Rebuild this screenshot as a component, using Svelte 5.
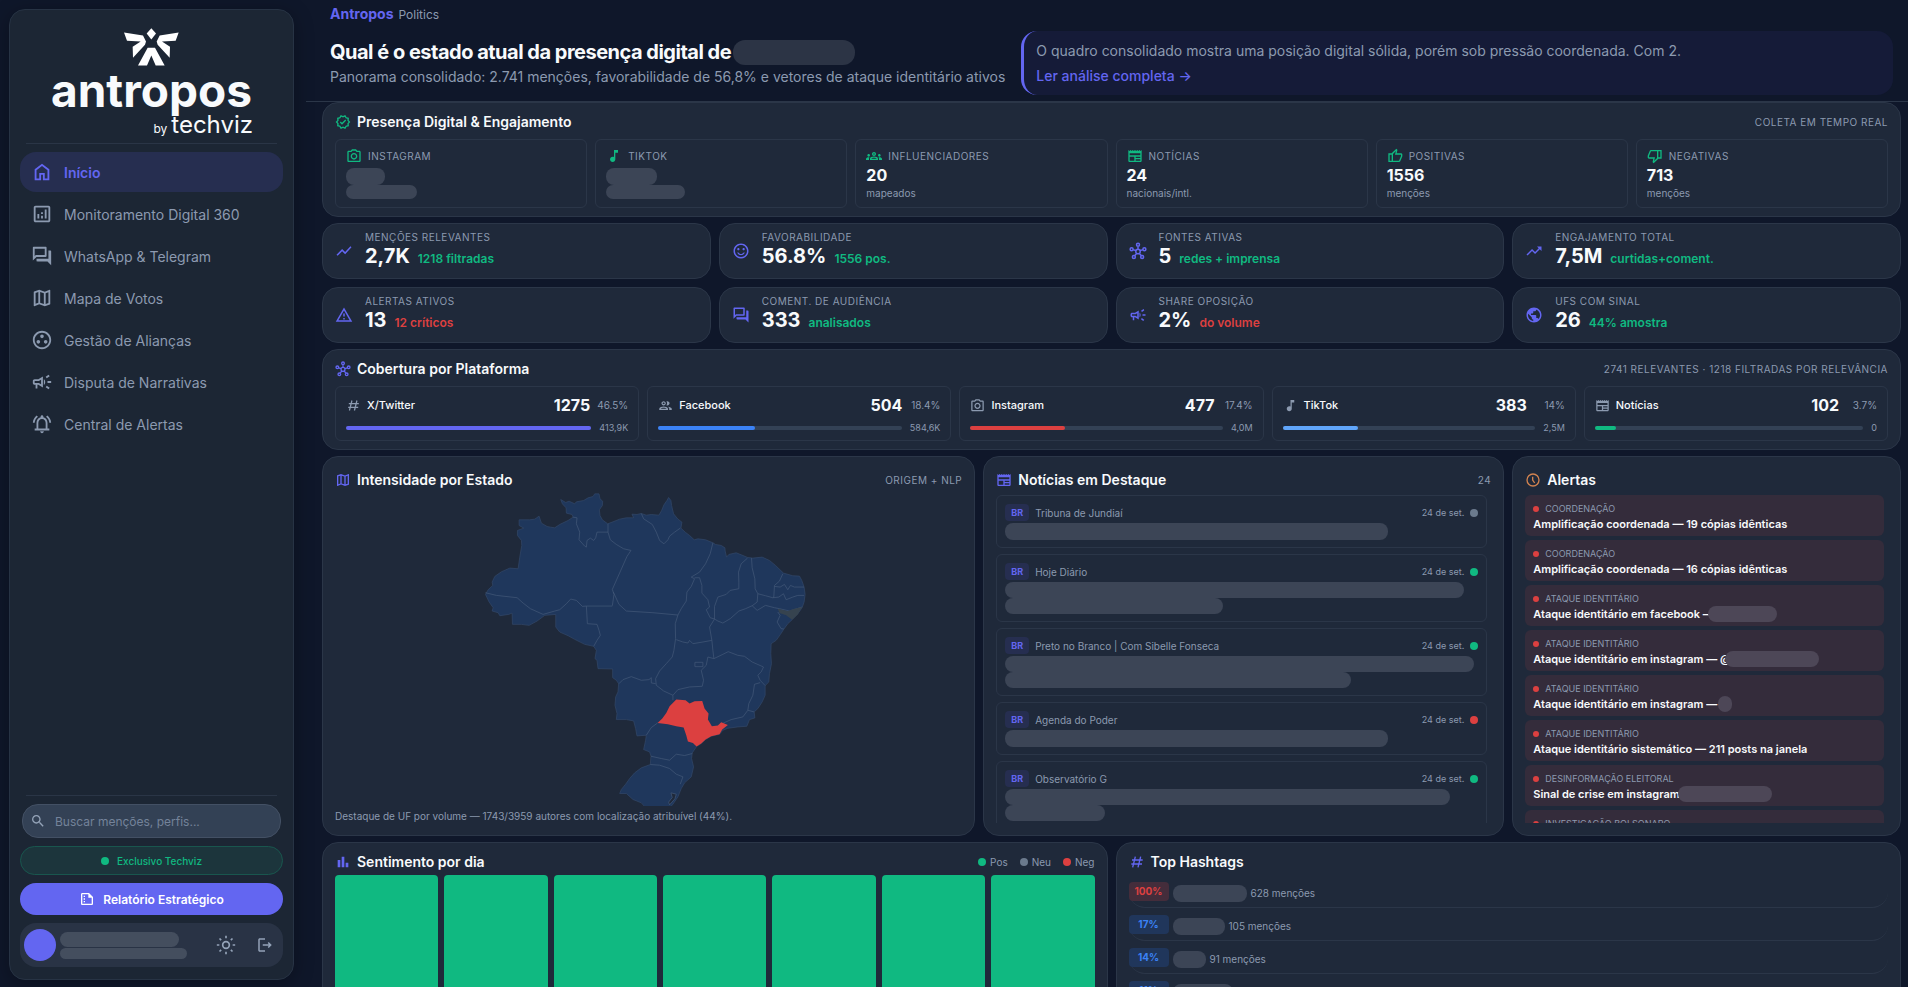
<script>
  const icons = {
    home: 'M6 19h3v-6h6v6h3v-9l-6-4.5L6 10v9zm-2 2V9l8-6 8 6v12h-7v-6h-2v6H4z',
    analytics: 'M19 3H5c-1.1 0-2 .9-2 2v14c0 1.1.9 2 2 2h14c1.1 0 2-.9 2-2V5c0-1.1-.9-2-2-2zm0 16H5V5h14v14zM7 12h2v5H7zm8-5h2v10h-2zm-4 7h2v3h-2zm0-4h2v2h-2z',
    forum: 'M15 4v7H5.17L4 12.17V4h11m1-2H3c-.55 0-1 .45-1 1v14l4-4h10c.55 0 1-.45 1-1V3c0-.55-.45-1-1-1zm5 4h-2v9H6v2c0 .55.45 1 1 1h11l4 4V7c0-.55-.45-1-1-1z',
    map: 'M20.5 3l-.16.03L15 5.1 9 3 3.36 4.9c-.21.07-.36.25-.36.48V20.5c0 .28.22.5.5.5l.16-.03L9 18.9l6 2.1 5.64-1.9c.21-.07.36-.25.36-.48V3.5c0-.28-.22-.5-.5-.5zM10 5.47l4 1.4v11.66l-4-1.4V5.47zm-5 .99l3-1.01v11.7l-3 1.16V6.46zm14 11.08l-3 1.01V6.86l3-1.16v11.84z',
    alliances: 'M12 2C6.48 2 2 6.48 2 12s4.48 10 10 10 10-4.48 10-10S17.52 2 12 2zm0 18c-4.41 0-8-3.59-8-8s3.59-8 8-8 8 3.59 8 8-3.59 8-8 8zM6 14a2 2 0 1 0 4 0a2 2 0 1 0-4 0zM14 14a2 2 0 1 0 4 0a2 2 0 1 0-4 0zM10 8a2 2 0 1 0 4 0a2 2 0 1 0-4 0z',
    campaign: 'M18 11v2h4v-2h-4zM16 17.61c.96.71 2.21 1.65 3.2 2.39.4-.53.8-1.07 1.2-1.6-.99-.74-2.24-1.68-3.2-2.4-.4.54-.8 1.08-1.2 1.61zM20.4 5.6c-.4-.53-.8-1.07-1.2-1.6-.99.74-2.24 1.68-3.2 2.4.4.53.8 1.07 1.2 1.6.96-.72 2.21-1.65 3.2-2.4zM4 9c-1.1 0-2 .9-2 2v2c0 1.1.9 2 2 2h1v4h2v-4h1l5 3V6L8 9H4zm5.03 1.71L11 9.53v4.94l-1.97-1.18-.48-.29H4v-2h4.55l.48-.29zM15.5 12c0-1.33-.58-2.53-1.5-3.35v6.69c.92-.81 1.5-2.01 1.5-3.34z',
    bell: 'M12 22c1.1 0 2-.9 2-2h-4c0 1.1.9 2 2 2zm6-5v-6c0-3.07-1.63-5.64-4.5-6.32V4c0-.83-.67-1.5-1.5-1.5s-1.5.67-1.5 1.5v.68C7.64 5.36 6 7.92 6 11v6H4v2h16v-2h-2zm-2 0H8v-6c0-2.48 1.51-4.5 4-4.5s4 2.02 4 4.5v6zM7.58 4.08L6.15 2.65C3.75 4.48 2.17 7.3 2.03 10.5h2c.15-2.65 1.51-4.97 3.55-6.42zm12.39 6.42h2c-.15-3.2-1.73-6.02-4.12-7.85l-1.42 1.43c2.02 1.45 3.39 3.77 3.54 6.42z',
    search: 'M15.5 14h-.79l-.28-.27C15.41 12.59 16 11.11 16 9.5 16 5.91 13.09 3 9.5 3S3 5.91 3 9.5 5.91 16 9.5 16c1.61 0 3.09-.59 4.23-1.57l.27.28v.79l5 4.99L20.49 19l-4.99-5zm-6 0C7.01 14 5 11.99 5 9.5S7.01 5 9.5 5 14 7.01 14 9.5 11.99 14 9.5 14z',
    report: 'M5 3c-1.1 0-2 .9-2 2v14c0 1.1.9 2 2 2h14c1.1 0 2-.9 2-2V9l-6-6H5zm0 2h9v5h5v9H5V5zM7 7h2v2H7zM7 11h2v2H7zM7 15h2v2H7z',
    logout: 'M17 8l-1.41 1.41L17.17 11H9v2h8.17l-1.58 1.58L17 16l4-4-4-4zM5 5h7V3H5c-1.1 0-2 .9-2 2v14c0 1.1.9 2 2 2h7v-2H5V5z',
    verified: 'M23 11.99l-2.44-2.79.34-3.69-3.61-.82L15.4 1.5 12 2.96 8.6 1.5 6.71 4.69 3.1 5.5l.34 3.7L1 11.99l2.44 2.79-.34 3.7 3.61.82 1.89 3.2 3.4-1.47 3.4 1.46 1.89-3.19 3.61-.82-.34-3.69 2.44-2.8zm-3.95 1.48l-.56.65.08.85.18 1.95-1.9.43-.84.19-.44.74-.99 1.68-1.78-.77-.8-.34-.79.34-1.78.77-.99-1.67-.44-.74-.84-.19-1.9-.43.18-1.96.08-.85-.56-.65-1.29-1.48 1.29-1.48.56-.65-.08-.85-.18-1.95 1.9-.43.84-.19.44-.74.99-1.68 1.78.77.8.34.79-.34 1.78-.77.99 1.68.44.74.84.19 1.9.43-.18 1.95-.08.85.56.65 1.29 1.47-1.29 1.48zM10.5 13.2l-1.9-1.9-1.4 1.4 3.3 3.3 6.3-6.3-1.4-1.4z',
    camera: 'M14.12 4l1.83 2H20v13H4V6h4.05l1.83-2h4.24M15 2H9L7.17 4H4c-1.1 0-2 .9-2 2v13c0 1.1.9 2 2 2h16c1.1 0 2-.9 2-2V6c0-1.1-.9-2-2-2h-3.17L15 2zm-3 7.5c1.65 0 3 1.35 3 3s-1.35 3-3 3-3-1.35-3-3 1.35-3 3-3m0-2c-2.76 0-5 2.24-5 5s2.24 5 5 5 5-2.24 5-5-2.24-5-5-5z',
    music: 'M12 3v10.55c-.59-.34-1.27-.55-2-.55-2.21 0-4 1.79-4 4s1.79 4 4 4 4-1.79 4-4V7h4V3h-6z',
    groups: 'M4 13c1.1 0 2-.9 2-2s-.9-2-2-2-2 .9-2 2 .9 2 2 2zm1.13 1.1C4.76 14.04 4.39 14 4 14c-.99 0-1.93.21-2.78.58C.48 14.9 0 15.62 0 16.43V18h4.5v-1.61c0-.83.23-1.61.63-2.29zM20 13c1.1 0 2-.9 2-2s-.9-2-2-2-2 .9-2 2 .9 2 2 2zm4 3.43c0-.81-.48-1.53-1.22-1.85-.85-.37-1.79-.58-2.78-.58-.39 0-.76.04-1.13.1.4.68.63 1.46.63 2.29V18H24v-1.57zm-7.76-2.78c-1.17-.52-2.61-.9-4.24-.9s-3.07.39-4.24.9C6.68 14.13 6 15.21 6 16.39V18h12v-1.61c0-1.18-.68-2.26-1.76-2.74zM8.07 16c.09-.23.13-.39.91-.69.97-.38 1.99-.56 3.02-.56s2.05.18 3.02.56c.77.3.81.46.91.69H8.07zM12 8c.55 0 1 .45 1 1s-.45 1-1 1-1-.45-1-1 .45-1 1-1m0-2c-1.66 0-3 1.34-3 3s1.34 3 3 3 3-1.34 3-3-1.34-3-3-3z',
    news: 'M22 3l-1.67 1.67L18.67 3 17 4.67 15.33 3l-1.66 1.67L12 3l-1.67 1.67L8.67 3 7 4.67 5.33 3 3.67 4.67 2 3v16c0 1.1.9 2 2 2h16c1.1 0 2-.9 2-2V3zM11 19H4v-6h7v6zm9 0h-7v-2h7v2zm0-4h-7v-2h7v2zm0-4H4V8h16v3z',
    up: 'M18 21H2V8h5l7-7 1.25 1.25c.23.23.35.62.35.95v.35L14.5 8H21c1.1 0 2 .9 2 2v2c0 .25-.05.5-.15.75l-3 7c-.3.75-1.05 1.25-1.85 1.25zM9 19h9l3-7v-2h-9l1.35-5.5L9 8.85V19zM7 10H4v9h3v-9z',
    down: 'M6 3h16v13h-5l-7 7-1.25-1.25c-.23-.23-.35-.62-.35-.95v-.35L9.5 16H3c-1.1 0-2-.9-2-2v-2c0-.25.05-.5.15-.75l3-7C4.45 3.5 5.2 3 6 3zM15 5H6l-3 7v2h9l-1.35 5.5L15 15.15V5zM17 14h3V5h-3v9z',
    chart: 'M3.5 18.49l6-6.01 4 4L22 6.92l-1.41-1.41-7.09 7.97-4-4L2 16.99z',
    trend: 'M16 6l2.29 2.29-4.88 4.88-4-4L2 16.59 3.41 18l6-6 4 4 6.3-6.29L22 12V6h-6z',
    mood: 'M12 2C6.48 2 2 6.48 2 12s4.48 10 10 10 10-4.48 10-10S17.52 2 12 2zm0 18c-4.41 0-8-3.59-8-8s3.59-8 8-8 8 3.59 8 8-3.59 8-8 8zM15.5 11c.83 0 1.5-.67 1.5-1.5S16.33 8 15.5 8 14 8.67 14 9.5s.67 1.5 1.5 1.5zm-7 0c.83 0 1.5-.67 1.5-1.5S9.33 8 8.5 8 7 8.67 7 9.5 7.67 11 8.5 11zm3.5 6.5c2.33 0 4.31-1.46 5.11-3.5h-1.67c-.69 1.19-1.97 2-3.44 2s-2.75-.81-3.44-2H6.89c.8 2.04 2.78 3.5 5.11 3.5z',
    warning: 'M12 5.99L19.53 19H4.47L12 5.99M12 2L1 21h22L12 2zm1 14h-2v2h2v-2zm0-6h-2v4h2v-4z',
    globe: 'M12 2C6.48 2 2 6.48 2 12s4.48 10 10 10 10-4.48 10-10S17.52 2 12 2zm-1 17.93c-3.95-.49-7-3.85-7-7.93 0-.62.08-1.21.21-1.79L9 15v1c0 1.1.9 2 2 2v1.93zm6.9-2.54c-.26-.81-1-1.39-1.9-1.39h-1v-3c0-.55-.45-1-1-1H8v-2h2c.55 0 1-.45 1-1V7h2c1.1 0 2-.9 2-2v-.41c2.93 1.19 5 4.06 5 7.41 0 2.08-.8 3.97-2.1 5.39z',
    group: 'M9 13.75c-2.34 0-7 1.17-7 3.5V19h14v-1.75c0-2.33-4.66-3.5-7-3.5zM4.34 17c.84-.58 2.87-1.25 4.66-1.25s3.82.67 4.66 1.25H4.34zM9 12c1.93 0 3.5-1.57 3.5-3.5S10.93 5 9 5 5.5 6.57 5.5 8.5 7.07 12 9 12zm0-5c.83 0 1.5.67 1.5 1.5S9.83 10 9 10s-1.5-.67-1.5-1.5S8.17 7 9 7zm7.04 6.81c1.16.84 1.96 1.96 1.96 3.44V19h4v-1.75c0-2.02-3.5-3.17-5.96-3.44zM15 12c1.93 0 3.5-1.57 3.5-3.5S16.93 5 15 5c-.54 0-1.04.13-1.5.35.63.89 1 1.98 1 3.15s-.37 2.26-1 3.15c.46.22.96.35 1.5.35z',
    bars: 'M4 9h4v11H4zM16 13h4v7h-4zM10 4h4v16h-4z',
  };

  // these are drawn with strokes instead of fills
  const lineIcons = {
    hub: 'M9 12.5a3 3 0 1 0 6 0a3 3 0 1 0-6 0M10 3.5a2 2 0 1 0 4 0a2 2 0 1 0-4 0M1.5 9.5a2 2 0 1 0 4 0a2 2 0 1 0-4 0M18.5 9.5a2 2 0 1 0 4 0a2 2 0 1 0-4 0M4.500 20a2 2 0 1 0 4 0a2 2 0 1 0-4 0M15.5 20a2 2 0 1 0 4 0a2 2 0 1 0-4 0M12 5.5v4M5.5 10.2l3.6 1.3M18.5 10.2l-3.6 1.3M7.7 18.3l2.5-3.3M16.3 18.3l-2.5-3.3',
    tag: 'M9.5 4l-4 16M17.5 4l-4 16M4.5 9h16M3.5 15h16',
    clock: 'M3 12a9 9 0 1 0 18 0a9 9 0 1 0-18 0M11.5 7v5l3 4.5',
    sun: 'M8 12a4 4 0 1 0 8 0a4 4 0 1 0-8 0M12 1v3M12 20v3M1 12h3M20 12h3M4.2 4.2l2 2M17.8 17.8l2 2M4.2 19.8l2-2M17.8 6.2l2-2',
  };

  const nav = [
    { icon: 'home', label: 'Início', active: true },
    { icon: 'analytics', label: 'Monitoramento Digital 360' },
    { icon: 'forum', label: 'WhatsApp & Telegram' },
    { icon: 'map', label: 'Mapa de Votos' },
    { icon: 'alliances', label: 'Gestão de Alianças' },
    { icon: 'campaign', label: 'Disputa de Narrativas' },
    { icon: 'bell', label: 'Central de Alertas' },
  ];

  const presence = [
    { icon: 'camera', label: 'Instagram', hidden: [39, 71] },
    { icon: 'music', label: 'TikTok', hidden: [51, 79] },
    { icon: 'groups', label: 'Influenciadores', value: '20', note: 'mapeados' },
    { icon: 'news', label: 'Notícias', value: '24', note: 'nacionais/intl.' },
    { icon: 'up', label: 'Positivas', value: '1556', note: 'menções' },
    { icon: 'down', label: 'Negativas', value: '713', note: 'menções' },
  ];

  const kpis = [
    { icon: 'chart', label: 'Menções relevantes', value: '2,7K', note: '1218 filtradas' },
    { icon: 'mood', label: 'Favorabilidade', value: '56.8%', note: '1556 pos.' },
    { icon: 'hub', label: 'Fontes ativas', value: '5', note: 'redes + imprensa' },
    { icon: 'trend', label: 'Engajamento total', value: '7,5M', note: 'curtidas+coment.' },
    { icon: 'warning', label: 'Alertas ativos', value: '13', note: '12 críticos', bad: true },
    { icon: 'forum', label: 'Coment. de audiência', value: '333', note: 'analisados' },
    { icon: 'campaign', label: 'Share oposição', value: '2%', note: 'do volume', bad: true },
    { icon: 'globe', label: 'UFs com sinal', value: '26', note: '44% amostra' },
  ];

  const platforms = [
    { icon: 'tag', name: 'X/Twitter', count: 1275, pct: '46.5%', reach: '413,9K', color: '#6366f1' },
    { icon: 'group', name: 'Facebook', count: 504, pct: '18.4%', reach: '584,6K', color: '#3b82f6' },
    { icon: 'camera', name: 'Instagram', count: 477, pct: '17.4%', reach: '4,0M', color: '#dc4040' },
    { icon: 'music', name: 'TikTok', count: 383, pct: '14%', reach: '2,5M', color: '#60a5fa' },
    { icon: 'news', name: 'Notícias', count: 102, pct: '3.7%', reach: '0', color: '#10b981' },
  ];
  const maxCount = Math.max(...platforms.map((p) => p.count));

  const news = [
    { source: 'Tribuna de Jundiaí', tone: 'neu', lines: [81] },
    { source: 'Hoje Diário', tone: 'pos', lines: [97, 46] },
    { source: 'Preto no Branco | Com Sibelle Fonseca', tone: 'pos', lines: [99, 73] },
    { source: 'Agenda do Poder', tone: 'neg', lines: [81] },
    { source: 'Observatório G', tone: 'pos', lines: [94, 21] },
  ];

  const alerts = [
    { kind: 'Coordenação', text: 'Amplificação coordenada — 19 cópias idênticas' },
    { kind: 'Coordenação', text: 'Amplificação coordenada — 16 cópias idênticas' },
    { kind: 'Ataque identitário', text: 'Ataque identitário em facebook —', hidden: 69 },
    { kind: 'Ataque identitário', text: 'Ataque identitário em instagram — @', hidden: 94 },
    { kind: 'Ataque identitário', text: 'Ataque identitário em instagram — ', hidden: 14, apart: true },
    { kind: 'Ataque identitário', text: 'Ataque identitário sistemático — 211 posts na janela' },
    { kind: 'Desinformação eleitoral', text: 'Sinal de crise em instagram', hidden: 94, apart: true },
    { kind: 'Investigação Bolsonaro', text: '' },
  ];

  const days = [160, 160, 160, 160, 160, 160, 160];

  const hashtags = [
    { pct: '100%', hidden: 74, count: '628 menções', hot: true },
    { pct: '17%', hidden: 52, count: '105 menções' },
    { pct: '14%', hidden: 33, count: '91 menções' },
    { pct: '11%', hidden: 60, count: '70 menções' },
  ];

  let query = $state('');
</script>

{#snippet icon(name, size)}
  <svg class="icon" width={size} height={size} viewBox="0 0 24 24" aria-hidden="true">
    {#if lineIcons[name]}
      <path class="line" d={lineIcons[name]} />
    {:else}
      <path d={icons[name]} />
    {/if}
  </svg>
{/snippet}

<div class="shell">
  <aside class="sidebar">
    <div class="logo">
      <svg class="bird" width="55" height="38" viewBox="375 84 165 113" aria-hidden="true">
        <path d="M457 84l14 16-14 18-14-18z" />
        <path d="M375 97l57 9 9 18-3 10-36 39-1-33 24-16-41-2z" />
        <path d="M539 97l-57 9-9 18 3 10 36 39 1-33-24-16 41-2z" />
        <path d="M446 143h22l29 53h-27l-13-30-13 30h-27z" />
      </svg>
      <div class="wordmark">antropos</div>
      <div class="byline"><small>by</small>techviz</div>
    </div>

    <nav class="nav">
      {#each nav as item}
        <a href="#{item.icon}" class:active={item.active}>
          {@render icon(item.icon, 22)}
          <span>{item.label}</span>
        </a>
      {/each}
    </nav>

    <div class="side-foot">
      <label class="search">
        {@render icon('search', 16)}
        <input type="text" placeholder="Buscar menções, perfis..." aria-label="Buscar" bind:value={query} />
      </label>
      <div class="exclusive"><i class="dot pos"></i>Exclusivo Techviz</div>
      <button class="report" type="button">{@render icon('report', 16)}Relatório Estratégico</button>
      <div class="user">
        <div class="avatar"></div>
        <div class="who"><i class="name"></i><i class="mail"></i></div>
        <button type="button" aria-label="Tema">{@render icon('sun', 20)}</button>
        <button type="button" aria-label="Sair">{@render icon('logout', 18)}</button>
      </div>
    </div>
  </aside>

  <main class="main">
    <header class="top">
      <div class="crumb"><strong>Antropos</strong><span>Politics</span></div>
      <div class="intro">
        <div class="question">
          <h1>Qual é o estado atual da presença digital de<i class="mask"></i></h1>
          <p>Panorama consolidado: 2.741 menções, favorabilidade de 56,8% e vetores de ataque identitário ativos</p>
        </div>
        <div class="callout">
          <p>O quadro consolidado mostra uma posição digital sólida, porém sob pressão coordenada. Com 2.</p>
          <a href="#analise">Ler análise completa →</a>
        </div>
      </div>
    </header>

    <div class="content">
      <section class="card">
        <div class="head">
          <span class="green">{@render icon('verified', 16)}</span>
          <h2>Presença Digital &amp; Engajamento</h2>
          <span class="aside">Coleta em tempo real</span>
        </div>
        <div class="presence">
          {#each presence as p}
            <div class="cell">
              <div class="cell-label"><span class="green">{@render icon(p.icon, 16)}</span>{p.label}</div>
              {#if p.hidden}
                <i class="mask value-mask" style="width: {p.hidden[0]}px"></i>
                <i class="mask note-mask" style="width: {p.hidden[1]}px"></i>
              {:else}
                <div class="cell-value">{p.value}</div>
                <div class="cell-note">{p.note}</div>
              {/if}
            </div>
          {/each}
        </div>
      </section>

      <div class="kpis">
        {#each kpis as k}
          <div class="card kpi">
            {@render icon(k.icon, 18)}
            <div class="kpi-body">
              <div class="kpi-label">{k.label}</div>
              <div class="kpi-row">
                <strong>{k.value}</strong>
                <span class:bad={k.bad}>{k.note}</span>
              </div>
            </div>
          </div>
        {/each}
      </div>

      <section class="card">
        <div class="head">
          {@render icon('hub', 16)}
          <h2>Cobertura por Plataforma</h2>
          <span class="aside">2741 relevantes · 1218 filtradas por relevância</span>
        </div>
        <div class="platforms">
          {#each platforms as p}
            <div class="cell">
              <div class="platform-row">
                {@render icon(p.icon, 15)}
                <span class="platform-name">{p.name}</span>
                <strong>{p.count}</strong>
                <span class="pct">{p.pct}</span>
              </div>
              <div class="meter">
                <div class="track">
                  <div class="fill" style="width: {(p.count / maxCount) * 100}%; background: {p.color}"></div>
                </div>
                <span>{p.reach}</span>
              </div>
            </div>
          {/each}
        </div>
      </section>

      <div class="grid middle">
        <section class="card tall span5">
          <div class="head">
            {@render icon('map', 16)}
            <h2>Intensidade por Estado</h2>
            <span class="aside">Origem + NLP</span>
          </div>
          <svg class="brazil" viewBox="-375 128 1884 939" role="img" aria-label="Mapa do Brasil por estado">
            <path
              class="land"
              d="M303 147L318 156L328 152L345 160L350 154L372 150L385 142L400 138L405 130L418 130L421 145L429 152L428 165L419 178L421 195L428 208L444 220L460 214L480 206L500 202L522 202L517 191L532 192L545 189L560 194L575 192L598 194L606 180L613 163L622 150L627 141L634 150L636 165L642 190L655 206L667 215L664 233L678 246L690 255L704 268L715 265L738 268L760 277L768 282L785 285L796 292L797 302L801 320L808 312L830 307L845 313L864 321L880 323L908 320L930 330L948 345L972 368L1000 376L1020 377L1027 390L1034 410L1037 432L1034 455L1028 472L1015 490L998 508L985 520L972 538L963 552L950 570L935 580L934 610L936 640L930 670L928 695L917 706L917 735L908 755L895 775L884 785L886 803L870 808L862 828L835 830L805 834L790 840L780 852L755 858L738 868L725 880L711 889L698 908L696 925L702 950L695 980L675 998L665 1015L655 1040L640 1062L625 1080L565 1080L545 1058L520 1048L500 1030L480 1030L485 1018L498 1002L510 985L525 968L545 953L572 943L574 918L570 905L552 898L558 870L560 855L532 857L528 835L522 812L500 808L470 808L472 790L466 765L468 740L475 725L477 700L470 690L459 682L459 656L415 655L412 630L406 625L410 600L402 588L375 582L345 567L325 556L300 545L288 530L288 492L255 495L232 512L208 525L185 522L158 522L157 488L147 492L120 496L115 487L97 482L100 472L88 455L77 432L85 418L99 405L97 395L105 378L125 364L150 353L175 355L180 320L186 285L185 270L173 255L173 240L192 233L178 225L178 208L210 208L225 206L238 197L245 218L262 228L272 230L285 232L300 222L325 210L340 200L337 192L320 188L319 172L308 160Z"
            />
            <path
              class="borders"
              d="M340 200L352 202L350 220L360 245L358 268L375 287L380 290L382 270L392 263L402 270L408 262L412 245L445 245V220M445 245L452 268L470 282L492 295L514 300L502 318L458 417L463 432L458 466M77 427L110 435L172 442L190 458L212 475L250 492L285 482L300 478L320 460L333 446L350 450L368 468L380 467H458M380 467L383 520L412 522L418 540L422 555L412 570L402 588M461 425L478 462L500 482L580 487L655 494M545 189L552 205L578 222L590 245L600 270L613 280L625 268L630 257L645 245L662 233M760 277L752 310L738 340L720 365L695 380L705 385L695 408L682 425L680 452L665 475L655 494M705 382L720 382L727 405L727 428L745 448L750 470L740 478L752 502L765 506M864 323L845 340L837 365L838 395L838 415L812 420L800 432L775 440L765 468L765 506L775 512L790 518L812 505L838 482L858 475L878 466L893 455L895 430L887 415L886 385L878 352L876 323M895 430L918 436L940 442L943 440L945 405L960 392L970 370M945 408L962 410L975 402L985 418L993 405L1005 410L1034 410M940 442L958 440L972 430L980 448L1000 440L1015 435L1034 435M878 466L893 480L918 465L945 472L960 475L990 482L1028 470M955 485L962 495L953 515L965 535L973 536M655 494L647 520L648 565L643 600L638 620L620 640L600 662L588 685L590 705L612 722L640 735V750M650 568L670 575L685 578L690 570L700 580L730 575L757 570M765 506L750 530L757 570L760 600L763 625L745 620L740 645L725 660L732 690L728 708L690 710L655 718L640 735M706 636h24v13h-24zM478 700L490 688L515 679L545 690L568 688L575 682L575 698L588 700M763 625L790 612L806 604L835 615L855 618L878 635L912 650L905 665L895 675L902 690L917 706M902 697L885 702L880 735L868 760L865 780L884 785M865 780L850 800L815 808L788 820M594 818L575 832L560 855M574 918L605 925L630 930L650 912L675 916L698 910M572 943L600 945L630 955L650 972L670 980L662 1002"
            />
            <path class="no-data" d="M955 475L985 482L1005 475L1028 470L1015 492L998 508L980 495L960 488Z" />
            <path class="water" d="M634 1028L650 1032L646 1046L630 1064L627 1056L638 1042Z" />
            <path
              class="hot"
              d="M594 818L608 805L620 788L630 768L650 748L678 750L690 760L705 753L728 752L735 775L747 790L745 808L757 828L775 826L785 816L805 824L788 838L780 852L755 858L738 868L725 880L711 889L700 878L685 874L680 855L672 832L650 828L625 822Z"
            />
          </svg>
          <p class="caption">Destaque de UF por volume — 1743/3959 autores com localização atribuível (44%).</p>
        </section>

        <section class="card tall span4">
          <div class="head">
            {@render icon('news', 16)}
            <h2>Notícias em Destaque</h2>
            <span class="aside">24</span>
          </div>
          <div class="list news">
            {#each news as n}
              <article class="cell">
                <div class="news-row">
                  <b>BR</b>
                  <span class="source">{n.source}</span>
                  <time>24 de set.</time>
                  <i class="dot {n.tone}"></i>
                </div>
                {#each n.lines as width}
                  <i class="mask" class:single={n.lines.length === 1} style="width: {width}%"></i>
                {/each}
              </article>
            {/each}
          </div>
        </section>

        <section class="card tall span3">
          <div class="head">
            <span class="orange">{@render icon('clock', 16)}</span>
            <h2>Alertas</h2>
          </div>
          <div class="list alerts">
            {#each alerts as a}
              <article class="alert">
                <div class="alert-kind"><i class="dot neg"></i>{a.kind}</div>
                <div class="alert-text">
                  <span>{a.text}</span>{#if a.hidden}<i class="mask" class:apart={a.apart} style="width: {a.hidden}px"></i>{/if}
                </div>
              </article>
            {/each}
          </div>
        </section>
      </div>

      <div class="grid">
        <section class="card snug span6">
          <div class="head">
            {@render icon('bars', 16)}
            <h2>Sentimento por dia</h2>
            <div class="legend">
              <span><i class="dot pos"></i>Pos</span>
              <span><i class="dot neu"></i>Neu</span>
              <span><i class="dot neg"></i>Neg</span>
            </div>
          </div>
          <div class="days">
            {#each days as height}
              <div class="day" style="height: {height}px"></div>
            {/each}
          </div>
        </section>

        <section class="card snug span6">
          <div class="head">
            {@render icon('tag', 16)}
            <h2>Top Hashtags</h2>
          </div>
          {#each hashtags as h}
            <div class="hashtag">
              <b class:hot={h.hot}>{h.pct}</b>
              <i class="mask" style="width: {h.hidden}px"></i>
              <span>{h.count}</span>
            </div>
          {/each}
        </section>
      </div>
    </div>
  </main>
</div>

<style>
  :global(body) {
    margin: 0;
    background: #0f172a;
  }

  .shell {
    --accent: #6366f1;
    --green: #10b981;
    --red: #dc4040;
    --text: #f8fafc;
    --muted: #8c9ab0;
    --card: #1f293a;
    --line: #2b3648;
    --mask: #3c4556;
    display: flex;
    gap: 12px;
    height: 100vh;
    overflow: hidden;
    color: var(--text);
    font-family: Inter, sans-serif;
    font-size: 14px;
  }

  .shell :global(*) {
    box-sizing: border-box;
  }

  h1, h2, p {
    margin: 0;
  }

  a {
    text-decoration: none;
  }

  button {
    display: flex;
    align-items: center;
    justify-content: center;
    padding: 0;
    border: 0;
    background: none;
    color: inherit;
    font-family: inherit;
    cursor: pointer;
  }

  .icon {
    display: block;
    flex-shrink: 0;
    fill: currentColor;
  }

  .icon .line {
    fill: none;
    stroke: currentColor;
    stroke-width: 2;
  }

  .dot {
    width: 8px;
    height: 8px;
    border-radius: 50%;
    flex-shrink: 0;
  }

  .pos { background: var(--green); }
  .neu { background: #6b7a8d; }
  .neg { background: var(--red); }
  .green { color: var(--green); }
  .orange { color: #d18350; }

  .mask {
    display: block;
    flex-shrink: 0;
    border-radius: 8px;
    background: var(--mask);
  }

  /* sidebar */
  .sidebar {
    display: flex;
    flex-direction: column;
    flex-shrink: 0;
    width: 285px;
    margin: 9px 0 7px 9px;
    padding: 18px 10px 12px;
    border: 1px solid #273344;
    border-radius: 16px;
    background: #1c2634;
    box-shadow: 0 4px 20px rgba(0, 0, 0, 0.3);
  }

  .logo {
    display: flex;
    flex-direction: column;
    align-items: center;
    margin: 0 6px 8px;
    padding-bottom: 6px;
    border-bottom: 1px solid #2a3546;
  }

  .bird {
    fill: #fff;
  }

  .wordmark {
    margin-top: 1px;
    font-size: 46px;
    font-weight: 700;
    line-height: 46px;
  }

  .byline {
    display: flex;
    align-items: baseline;
    align-self: flex-end;
    gap: 4px;
    height: 24px;
    margin-right: 24px;
    font-size: 24px;
    line-height: 24px;
  }

  .byline small {
    font-size: 12px;
  }

  .nav {
    display: flex;
    flex-direction: column;
    flex: 1;
    gap: 2px;
  }

  .nav a {
    display: flex;
    align-items: center;
    gap: 11px;
    height: 40px;
    padding: 0 11px;
    border-radius: 16px;
    color: var(--muted);
  }

  .nav a.active {
    background: #262e50;
    color: var(--accent);
    font-weight: 600;
  }

  .side-foot {
    display: flex;
    flex-direction: column;
    gap: 8px;
  }

  .side-foot::before {
    content: '';
    margin: 0 6px;
    border-top: 1px solid #2a3546;
  }

  .search {
    display: flex;
    align-items: center;
    gap: 9px;
    height: 34px;
    margin: 0 2px;
    padding: 0 7px;
    border: 1px solid #435064;
    border-radius: 16px;
    background: #334155;
    color: #94a3b8;
  }

  .search input {
    flex: 1;
    min-width: 0;
    padding: 0;
    border: 0;
    outline: 0;
    background: none;
    color: var(--text);
    font-family: inherit;
    font-size: 12px;
  }

  .search input::placeholder {
    color: #74839a;
  }

  .exclusive {
    display: flex;
    align-items: center;
    justify-content: center;
    gap: 8px;
    height: 29px;
    border: 1px solid #19564e;
    border-radius: 16px;
    background: #1c353c;
    color: var(--green);
    font-size: 10px;
    font-weight: 500;
  }

  .report {
    gap: 8px;
    height: 32px;
    border-radius: 16px;
    background: var(--accent);
    color: #fff;
    font-size: 12px;
    font-weight: 600;
  }

  .user {
    display: flex;
    align-items: center;
    gap: 20px;
    height: 44px;
    padding: 0 9px 0 4px;
    border-radius: 16px;
    background: #293345;
    color: #94a3b8;
  }

  .avatar {
    width: 32px;
    height: 32px;
    border-radius: 50%;
    background: var(--accent);
  }

  .who {
    display: flex;
    flex-direction: column;
    flex: 1;
    gap: 1px;
    margin-left: -16px;
  }

  .who i {
    border-radius: 8px;
    background: #444e5e;
  }

  .who .name {
    width: 119px;
    height: 15px;
  }

  .who .mail {
    width: 127px;
    height: 11px;
  }

  /* header */
  .main {
    display: flex;
    flex-direction: column;
    flex: 1;
    min-width: 0;
  }

  .top {
    flex-shrink: 0;
    padding: 4px 15px 6px 24px;
    border-bottom: 1px solid var(--line);
  }

  .crumb {
    display: flex;
    align-items: baseline;
    gap: 5px;
    height: 20px;
    margin-bottom: 7px;
    line-height: 20px;
  }

  .crumb strong {
    color: var(--accent);
    font-weight: 700;
  }

  .crumb span {
    color: var(--muted);
    font-size: 12px;
  }

  .intro {
    display: flex;
    align-items: center;
    gap: 16px;
  }

  .question {
    flex-shrink: 0;
  }

  h1 {
    display: flex;
    align-items: center;
    gap: 2px;
    font-size: 20px;
    font-weight: 700;
    letter-spacing: -0.5px;
    line-height: 28px;
  }

  h1 .mask {
    width: 122px;
    height: 25px;
    border-radius: 12px;
    background: #2c3445;
  }

  .question p,
  .callout p {
    color: var(--muted);
    line-height: 22px;
  }

  .callout {
    display: flex;
    flex-direction: column;
    flex: 1;
    gap: 3px;
    min-width: 0;
    padding: 9px 12px 8px;
    border-left: 3px solid var(--accent);
    border-radius: 16px;
    background: #151b38;
  }

  .callout a {
    color: var(--accent);
    font-weight: 500;
    line-height: 22px;
  }

  /* cards */
  .content {
    display: flex;
    flex-direction: column;
    flex: 1;
    gap: 6px;
    min-height: 0;
    padding: 0 7px 16px 16px;
    overflow-y: auto;
    scrollbar-width: none;
  }

  .content > * {
    flex-shrink: 0;
  }

  .card {
    padding: 8px 12px;
    border: 1px solid var(--line);
    border-radius: 16px;
    background: var(--card);
  }

  .head {
    display: flex;
    align-items: center;
    gap: 6px;
    margin-bottom: 7px;
    color: var(--accent);
  }

  .head h2 {
    color: var(--text);
    font-size: 14px;
    font-weight: 600;
    line-height: 21px;
  }

  .aside {
    margin-left: auto;
    color: var(--muted);
    font-size: 10px;
    letter-spacing: 0.5px;
    text-transform: uppercase;
  }

  .cell {
    border: 1px solid var(--line);
    border-radius: 6px;
  }

  .presence {
    display: grid;
    grid-template-columns: repeat(6, 1fr);
    gap: 8px;
  }

  .presence .cell {
    height: 69px;
    padding: 8px 10px;
  }

  .cell-label {
    display: flex;
    align-items: center;
    gap: 6px;
    color: var(--muted);
    font-size: 10px;
    letter-spacing: 0.5px;
    line-height: 16px;
    text-transform: uppercase;
  }

  .cell-value {
    font-size: 16px;
    font-weight: 700;
    line-height: 22px;
  }

  .cell-note {
    color: var(--muted);
    font-size: 10px;
    line-height: 14px;
  }

  .value-mask {
    height: 17px;
    margin-top: 4px;
  }

  .note-mask {
    height: 14px;
  }

  .kpis {
    display: grid;
    grid-template-columns: repeat(4, 1fr);
    gap: 8px;
  }

  .kpi {
    display: flex;
    align-items: center;
    gap: 12px;
    padding: 6px 12px;
    color: var(--accent);
  }

  .kpi-body {
    padding-bottom: 4px;
  }

  .kpi-label {
    color: var(--muted);
    font-size: 10px;
    letter-spacing: 0.5px;
    line-height: 14px;
    text-transform: uppercase;
  }

  .kpi-row {
    display: flex;
    align-items: baseline;
    gap: 8px;
    height: 24px;
    line-height: 24px;
  }

  .kpi-row strong {
    color: var(--text);
    font-size: 20px;
    font-weight: 700;
  }

  .kpi-row span {
    color: var(--green);
    font-size: 12px;
    font-weight: 600;
  }

  .kpi-row .bad {
    color: var(--red);
  }

  .platforms {
    display: grid;
    grid-template-columns: repeat(5, 1fr);
    gap: 8px;
  }

  .platforms .cell {
    padding: 7px 10px 6px;
  }

  .platform-row {
    display: flex;
    align-items: center;
    gap: 6px;
    color: var(--muted);
    line-height: 22px;
  }

  .platform-name {
    flex: 1;
    color: var(--text);
    font-size: 11px;
    font-weight: 500;
  }

  .platform-row strong {
    color: var(--text);
    font-size: 16px;
    font-weight: 700;
  }

  .pct {
    width: 32px;
    font-size: 10px;
    text-align: right;
  }

  .meter {
    display: flex;
    align-items: center;
    gap: 8px;
    margin-top: 6px;
    color: var(--muted);
    font-size: 9px;
    line-height: 12px;
  }

  .track {
    flex: 1;
    height: 4px;
    border-radius: 2px;
    background: #334155;
  }

  .fill {
    height: 4px;
    border-radius: 2px;
  }

  /* lower grid */
  .grid {
    display: grid;
    grid-template-columns: repeat(12, 1fr);
    gap: 8px;
  }

  .middle {
    grid-template-rows: 380px;
  }

  .span3 { grid-column: span 3; }
  .span4 { grid-column: span 4; }
  .span5 { grid-column: span 5; }
  .span6 { grid-column: span 6; }

  .tall {
    display: flex;
    flex-direction: column;
    min-height: 0;
    padding: 12px;
  }

  .tall .head {
    margin-bottom: 5px;
  }

  .snug .head {
    margin-bottom: 3px;
  }

  .brazil {
    flex: 1;
    min-height: 0;
    width: 100%;
    margin-top: -2px;
  }

  .land {
    fill: #1f375c;
    stroke: #34486a;
    stroke-width: 2;
  }

  .borders {
    fill: none;
    stroke: #465a7a;
    stroke-width: 2;
  }

  .no-data { fill: #36434f; }
  .water { fill: var(--card); stroke: #465a7a; stroke-width: 2; }
  .hot { fill: var(--red); }

  .caption {
    margin-top: 3px;
    color: var(--muted);
    font-size: 10px;
    line-height: 14px;
  }

  .list {
    display: flex;
    flex-direction: column;
    flex: 1;
    min-height: 0;
    overflow: hidden;
  }

  .list > * {
    flex-shrink: 0;
  }

  .news {
    gap: 6px;
    padding-right: 4px;
  }

  .news .cell {
    padding: 8px 8px 7px;
  }

  .news .mask {
    height: 16px;
  }

  .news .single {
    height: 17px;
  }

  .news-row {
    display: flex;
    align-items: center;
    gap: 6px;
    height: 17px;
    margin-bottom: 2px;
    color: var(--muted);
    font-size: 10px;
  }

  .news-row b {
    padding: 0 6px;
    border-radius: 4px;
    background: #262e50;
    color: var(--accent);
    font-size: 9px;
    font-weight: 700;
    line-height: 17px;
  }

  .source {
    flex: 1;
  }

  .news-row time {
    font-size: 9px;
  }

  .alerts {
    gap: 4px;
    padding-right: 4px;
  }

  .alert {
    padding: 6px 8px 4px;
    border-radius: 6px;
    background: #342c3b;
  }

  .alert-kind {
    display: flex;
    align-items: center;
    gap: 6px;
    color: var(--muted);
    font-size: 9px;
    line-height: 15px;
    text-transform: uppercase;
  }

  .alert-kind .dot {
    width: 6px;
    height: 6px;
  }

  .alert-text {
    display: flex;
    align-items: center;
    height: 16px;
    font-size: 11px;
    font-weight: 600;
    white-space: pre;
  }

  .alert-text .mask {
    height: 16px;
    margin-left: -6px;
    background: #4d4757;
  }

  .alert-text .apart {
    margin-left: -2px;
  }

  .legend {
    display: flex;
    gap: 12px;
    margin-left: auto;
    color: var(--muted);
    font-size: 10px;
  }

  .legend span {
    display: flex;
    align-items: center;
    gap: 4px;
  }

  .days {
    display: flex;
    align-items: flex-end;
    gap: 6px;
  }

  .day {
    flex: 1;
    border-radius: 4px 4px 0 0;
    background: var(--green);
  }

  .hashtag {
    display: flex;
    align-items: center;
    gap: 4px;
    height: 33px;
    padding-top: 4px;
    border-bottom: 1px solid var(--line);
    border-radius: 16px;
    color: var(--muted);
    font-size: 10px;
  }

  .hashtag b {
    width: 40px;
    margin-bottom: 3px;
    border-radius: 4px;
    background: #20365b;
    color: #3b82f6;
    font-weight: 700;
    line-height: 19px;
    text-align: center;
  }

  .hashtag .hot {
    background: #442d3b;
    color: var(--red);
  }

  .hashtag .mask {
    height: 17px;
  }
</style>
